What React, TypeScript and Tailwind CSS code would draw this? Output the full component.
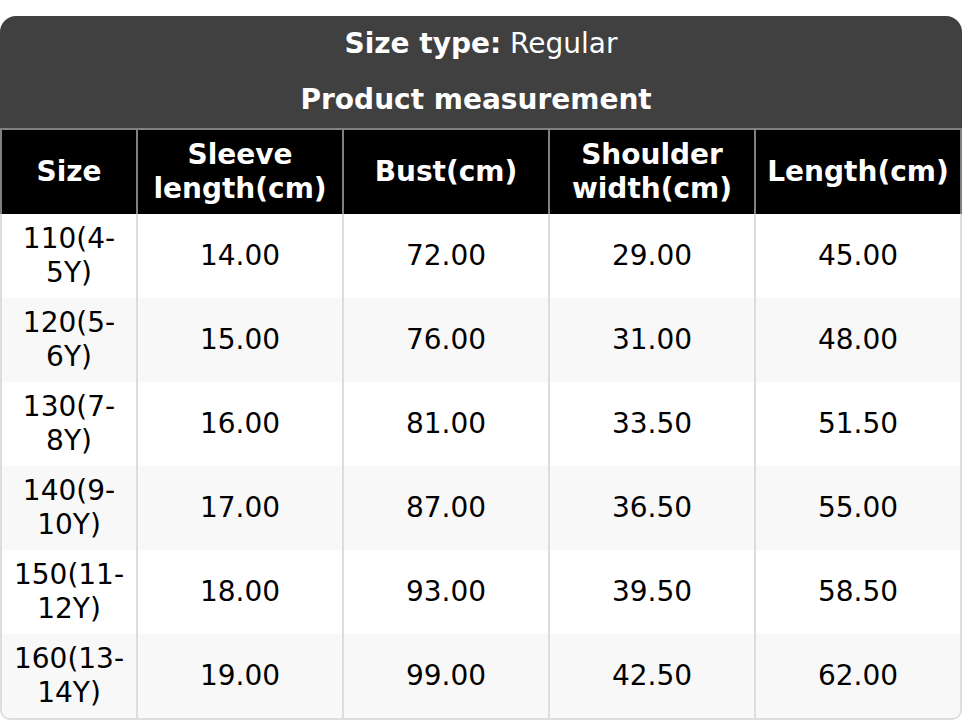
import React from "react";

const cols = ["Size", "Sleeve length(cm)", "Bust(cm)", "Shoulder width(cm)", "Length(cm)"];
const rows = [
  ["110(4-5Y)", "14.00", "72.00", "29.00", "45.00"],
  ["120(5-6Y)", "15.00", "76.00", "31.00", "48.00"],
  ["130(7-8Y)", "16.00", "81.00", "33.50", "51.50"],
  ["140(9-10Y)", "17.00", "87.00", "36.50", "55.00"],
  ["150(11-12Y)", "18.00", "93.00", "39.50", "58.50"],
  ["160(13-14Y)", "19.00", "99.00", "42.50", "62.00"],
];

export default function App() {
  return (
    <div className="w-[962px] bg-white pt-[16px] text-[28px] leading-[34px]" style={{ fontFamily: '"DejaVu Sans", sans-serif' }}>
      <div className="rounded-t-[16px] overflow-hidden bg-[#404040] text-white text-center border-b-2 border-[#808080]">
        <div className="py-[11px]">
          <span className="font-bold">Size type:</span> Regular
        </div>
        <div className="py-[11px] font-bold">Product measurement{"\u00a0"}</div>
      </div>
      <div className="grid grid-cols-[136px_206px_206px_206px_204px] bg-black text-white font-bold text-center border-x-2 border-[#808080]">
        {cols.map((c, i) => (
          <div
            key={c}
            className={`h-[84px] flex items-center justify-center px-2 ${i < 4 ? "border-r-2 border-[#808080]" : ""}`}
          >
            {c}
          </div>
        ))}
      </div>
      <div className="border-x-2 border-b-2 border-[#dddddd] rounded-b-[10px] overflow-hidden text-black text-center">
        {rows.map((r, ri) => (
          <div
            key={ri}
            className={`grid grid-cols-[136px_206px_206px_206px_204px] ${ri % 2 === 1 ? "bg-[#f8f8f8]" : "bg-white"}`}
          >
            {r.map((v, i) => (
              <div
                key={i}
                className={`h-[84px] flex items-center justify-center px-2 ${i < 4 ? "border-r-2 border-[#dddddd]" : ""}`}
              >
                {v}
              </div>
            ))}
          </div>
        ))}
      </div>
    </div>
  );
}
